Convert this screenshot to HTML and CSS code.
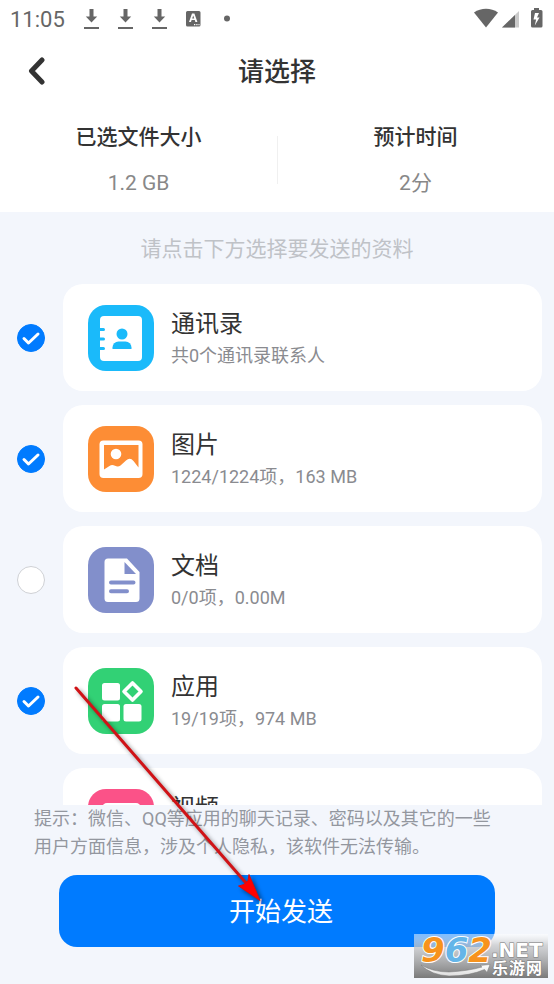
FILE: index.html
```html
<!DOCTYPE html>
<html lang="zh-CN">
<head>
<meta charset="utf-8">
<meta name="viewport" content="width=device-width, initial-scale=1">
<title>请选择</title>
<link rel="stylesheet" href="styles.css">
</head>
<body>
<div class="screen">
  <div class="status">
    <span class="status-time">11:05</span>
    <svg class="status-left" width="148" height="24" viewBox="0 0 148 24" fill="currentColor" aria-hidden="true">
      <g id="dl"><path d="M6.500 2h4v7.500h3.700l-5.700 6L2.800 9.500h3.700z"/><path d="M1 20h15v2H1z"/></g>
      <use href="#dl" x="34"/>
      <use href="#dl" x="68"/>
      <path fill-rule="evenodd" d="M104.500 4h11.500a1.500 1.500 0 0 1 1.500 1.500v12.500a1.500 1.500 0 0 1-1.500 1.500h-11.500a1.500 1.500 0 0 1-1.500-1.500v-12.500a1.500 1.500 0 0 1 1.500-1.500zM109 6.500l-3 8.500h2l.6-2h3.200l.6 2h2l-3-8.500zm1.200 2l1 3h-2zM111 17v1.200h1.300v-1.200zm2.300 0v1.200h1.200v-1.200zm2.200 0v1.200h1v-1.200z"/>
      <circle cx="144" cy="11.500" r="3"/>
    </svg>
    <svg class="status-right" width="70" height="24" viewBox="0 0 70 24" fill="currentColor" aria-hidden="true">
      <path d="M0 5.500C7 .5 17 .5 24 5.500L12 20.500z"/>
      <path d="M45 4v16.500H28z" opacity=".35"/>
      <path d="M41 8v12.500H28z"/>
      <path fill-rule="evenodd" d="M60 1h5v2h2q1.500 0 1.500 1.500v14.500q0 1.500-1.500 1.500h-8.500q-1.500 0-1.500-1.500v-14.500q0-1.500 1.500-1.500h1.500zM61 6l-1.500 6.500h2.600L60.800 18.500l4.700-8h-2.500L65 6z"/>
    </svg>
  </div>

  <header class="topbar">
    <button class="back" type="button" aria-label="返回">
      <svg width="18" height="28" viewBox="0 0 18 28" fill="none" stroke="currentColor" stroke-width="5" stroke-linecap="round" stroke-linejoin="round" aria-hidden="true"><path d="M14 3L3.500 14 14 25"/></svg>
    </button>
    <h1 class="title">请选择</h1>
  </header>

  <dl class="stats">
    <div class="stat"><dt>已选文件大小</dt><dd>1.2 GB</dd></div>
    <div class="stat"><dt>预计时间</dt><dd>2分</dd></div>
  </dl>

  <main class="list">
    <p class="hint">请点击下方选择要发送的资料</p>

    <label class="row">
      <span class="check"><input type="checkbox" checked><svg viewBox="0 0 28 28" aria-hidden="true"><path d="M7 14.500l4.500 4.500 9.500-9"/></svg></span>
      <span class="card">
        <svg class="icon" viewBox="0 0 66 66" aria-hidden="true">
          <rect width="66" height="66" rx="18" fill="#1abafa"/>
          <rect x="12" y="11" width="42" height="45" rx="4" fill="#fff"/>
          <g fill="#1abafa"><path d="M11 23h4.500a1.500 1.500 0 0 1 0 3H11zM11 32.500h4.500a1.500 1.500 0 0 1 0 3H11zM11 42h4.500a1.500 1.500 0 0 1 0 3H11z"/><circle cx="34" cy="29" r="5.500"/><path d="M24.500 44v-1.500a6 6 0 0 1 6-6h7a6 6 0 0 1 6 6V44z"/></g>
        </svg>
        <span class="info"><span class="name">通讯录</span><span class="detail">共0个通讯录联系人</span></span>
      </span>
    </label>

    <label class="row">
      <span class="check"><input type="checkbox" checked><svg viewBox="0 0 28 28" aria-hidden="true"><path d="M7 14.500l4.500 4.500 9.500-9"/></svg></span>
      <span class="card">
        <svg class="icon" viewBox="0 0 66 66" aria-hidden="true">
          <rect width="66" height="66" rx="18" fill="#fd8d35"/>
          <rect x="11.500" y="14.500" width="43" height="37.500" rx="4" fill="#fff"/>
          <path fill="#fd8d35" d="M16 19h34.500v22.500l-5-6.500q-3.500-4-7.500-.5l-5.500 5q-2.500 2-5.500.3-3-1.600-5.500.2L16 43.500z"/>
          <circle cx="28" cy="28" r="5.300" fill="#fff"/>
        </svg>
        <span class="info"><span class="name">图片</span><span class="detail">1224/1224项，163 MB</span></span>
      </span>
    </label>

    <label class="row">
      <span class="check"><input type="checkbox"><svg viewBox="0 0 28 28" aria-hidden="true"><path d="M7 14.500l4.500 4.500 9.500-9"/></svg></span>
      <span class="card">
        <svg class="icon" viewBox="0 0 66 66" aria-hidden="true">
          <rect width="66" height="66" rx="18" fill="#828fcb"/>
          <path fill="#fff" d="M20 11.500h19L51.500 25v26.500a3.500 3.500 0 0 1-3.500 3.500H20a3.500 3.500 0 0 1-3.500-3.500V15a3.500 3.500 0 0 1 3.500-3.500z"/>
          <path fill="#828fcb" d="M36.500 15v12h11.500z"/>
          <path stroke="#828fcb" stroke-width="4" stroke-linecap="round" d="M23 35.500h22.500M23 44.300h16"/>
        </svg>
        <span class="info"><span class="name">文档</span><span class="detail">0/0项，0.00M</span></span>
      </span>
    </label>

    <label class="row">
      <span class="check"><input type="checkbox" checked><svg viewBox="0 0 28 28" aria-hidden="true"><path d="M7 14.500l4.500 4.500 9.500-9"/></svg></span>
      <span class="card">
        <svg class="icon" viewBox="0 0 66 66" aria-hidden="true">
          <rect width="66" height="66" rx="18" fill="#32d175"/>
          <g fill="#fff"><rect x="14" y="15" width="18" height="17.500" rx="2.500"/><rect x="14" y="36" width="18" height="17.500" rx="2.500"/><rect x="35.500" y="36" width="18" height="17.500" rx="2.500"/></g>
          <path fill="none" stroke="#fff" stroke-width="3.600" stroke-linejoin="round" d="M44.500 15l8.500 8.500-8.500 8.500-8.500-8.500z"/>
        </svg>
        <span class="info"><span class="name">应用</span><span class="detail">19/19项，974 MB</span></span>
      </span>
    </label>

    <label class="row">
      <span class="check"><input type="checkbox"><svg viewBox="0 0 28 28" aria-hidden="true"><path d="M7 14.500l4.500 4.500 9.500-9"/></svg></span>
      <span class="card">
        <svg class="icon" viewBox="0 0 66 66" aria-hidden="true">
          <rect width="66" height="66" rx="18" fill="#fb5288"/>
          <rect x="14" y="14" width="39" height="39" rx="5" fill="#fff"/>
          <path fill="#fb5288" d="M28 25l14 8-14 8z"/>
        </svg>
        <span class="info"><span class="name">视频</span></span>
      </span>
    </label>
  </main>

  <footer class="footer">
    <p class="tip">提示：微信、QQ等应用的聊天记录、密码以及其它的一些<br>用户方面信息，涉及个人隐私，该软件无法传输。</p>
    <button class="send" type="button">开始发送</button>
  </footer>

  <svg class="arrow" width="204" height="230" viewBox="0 0 204 230" aria-hidden="true">
    <path d="M6 8L176 203" stroke="#d01317" stroke-width="3" stroke-linecap="round"/>
    <path d="M190 220.500l-21.500-14.500 5.500-1.500 4-4 1-6z" fill="#f00" stroke="#d80c10" stroke-linejoin="round"/>
  </svg>

  <svg class="mark" width="134" height="44" viewBox="0 0 134 44">
    <defs>
      <linearGradient id="shade" x2="0" y2="1"><stop offset="0" stop-color="#fff" stop-opacity=".5"/><stop offset=".25" stop-color="#c8c9cb" stop-opacity=".75"/><stop offset="1" stop-color="#777" stop-opacity=".98"/></linearGradient>
      <linearGradient id="silver" x2="0" y2="1"><stop offset="0" stop-color="#fff"/><stop offset="1" stop-color="#ddd"/></linearGradient>
    </defs>
    <rect width="134" height="44" fill="url(#shade)"/>
    <path d="M7 31q12 7 28 7 19-1 33-5l-2-1.500 10-1-3 8-2.500-3q-15 6.500-35.500 6.500-18-1-28-11z" fill="url(#silver)" stroke="#777" stroke-width=".5"/>
    <text class="mark-num" x="7" y="28"><tspan fill="#f7931d">9</tspan><tspan fill="#64b5e8">6</tspan><tspan fill="#f7931d">2</tspan></text>
    <text class="mark-net" x="77" y="23">.NET</text>
    <text class="mark-cn" x="78 95 112" y="40">乐游网</text>
  </svg>
</div>
</body>
</html>
```
FILE: styles.css
```css
* {
  box-sizing: border-box;
}

body {
  margin: 0;
  font-family: Roboto, "Noto Sans CJK SC", sans-serif;
  color: #333;
  background: #f3f6fc;
}

h1, p, dl, dd {
  margin: 0;
}

button {
  border: 0;
  padding: 0;
  font: inherit;
  cursor: pointer;
}

.screen {
  position: relative;
  display: flex;
  flex-direction: column;
  height: 100vh;
  overflow: hidden;
}

.status {
  display: flex;
  align-items: center;
  height: 38px;
  padding: 0 10px;
  background: #fff;
  color: #666;
}

.status-time {
  padding-top: 2px;
  font-size: 22px;
  line-height: 36px;
}

.status-left {
  margin-left: 18px;
}

.status-right {
  margin-left: auto;
}

.topbar {
  display: grid;
  grid-template-columns: 46px 1fr 46px;
  align-items: center;
  height: 66px;
  background: #fff;
}

.back {
  display: flex;
  justify-content: flex-end;
  background: none;
  color: #333;
}

.title {
  padding-top: 2px;
  text-align: center;
  font-size: 26px;
  font-weight: 500;
  line-height: 36px;
}

.stats {
  display: grid;
  grid-template-columns: 1fr 1fr;
  height: 108px;
  padding-top: 18px;
  background: linear-gradient(#f0f0f0, #f0f0f0) 50% 32px / 1px 48px no-repeat #fff;
  text-align: center;
  font-size: 21px;
  line-height: 30px;
}

.stat dt {
  font-weight: 500;
}

.stat dd {
  margin-top: 16px;
  color: #888;
}

.list {
  flex: 1;
  min-height: 0;
  overflow-y: auto;
  scrollbar-width: none;
}

.hint {
  padding-top: 2px;
  text-align: center;
  font-size: 21px;
  line-height: 70px;
  color: #bfc2c7;
}

.row {
  display: flex;
  align-items: center;
  gap: 18px;
  margin: 0 12px 14px 17px;
}

.check {
  display: grid;
  width: 28px;
  height: 28px;
}

.check input,
.check svg {
  grid-area: 1 / 1;
  width: 28px;
  height: 28px;
  margin: 0;
}

.check input {
  appearance: none;
  border: 1px solid #cfd1d5;
  border-radius: 50%;
  background: #fff;
}

.check input:checked {
  border-color: #007bff;
  background: #007bff;
}

.check svg {
  fill: none;
  stroke: #fff;
  stroke-width: 3;
  stroke-linecap: round;
  stroke-linejoin: round;
  pointer-events: none;
}

.card {
  flex: 1;
  display: flex;
  align-items: center;
  gap: 17px;
  min-height: 107px;
  padding: 20px 25px;
  border-radius: 20px;
  background: #fff;
}

.icon {
  flex: none;
  width: 66px;
  height: 66px;
}

.info {
  display: flex;
  flex-direction: column;
  min-height: 64px;
}

.name {
  font-size: 24px;
  line-height: 36px;
}

.detail {
  font-size: 18px;
  line-height: 28px;
  color: #8a8b90;
}

.footer {
  padding-bottom: 37px;
  background: #f3f6fc;
}

.tip {
  padding: 0 34px;
  font-size: 18px;
  line-height: 28px;
  color: #93979f;
}

.send {
  display: block;
  width: calc(100% - 118px);
  height: 72px;
  margin: 14px auto 0;
  padding: 0 0 4px 8px;
  border-radius: 18px;
  background: #007bff;
  color: #fff;
  font-size: 26px;
}

.arrow {
  position: absolute;
  left: 70px;
  top: 680px;
  fill: none;
  filter: drop-shadow(3px 3px 2px rgba(0, 0, 0, 0.45));
  pointer-events: none;
}

.mark {
  position: absolute;
  right: 6px;
  bottom: 6px;
}

.mark-num {
  font: italic bold 34px "DejaVu Sans", sans-serif;
  stroke: #fff;
  stroke-width: 2px;
  paint-order: stroke;
}

.mark-net,
.mark-cn {
  fill: #fff;
  stroke: #777;
  stroke-width: 1px;
  paint-order: stroke;
}

.mark-net {
  font: bold 20px "DejaVu Sans", sans-serif;
}

.mark-cn {
  font: bold 16px "Noto Sans CJK SC", sans-serif;
}
```
